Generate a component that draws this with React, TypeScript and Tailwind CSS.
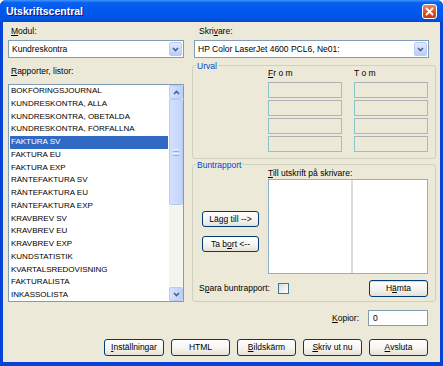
import React from 'react';

const reports = [
  'BOKFÖRINGSJOURNAL',
  'KUNDRESKONTRA, ALLA',
  'KUNDRESKONTRA, OBETALDA',
  'KUNDRESKONTRA, FÖRFALLNA',
  'FAKTURA SV',
  'FAKTURA EU',
  'FAKTURA EXP',
  'RÄNTEFAKTURA SV',
  'RÄNTEFAKTURA EU',
  'RÄNTEFAKTURA EXP',
  'KRAVBREV SV',
  'KRAVBREV EU',
  'KRAVBREV EXP',
  'KUNDSTATISTIK',
  'KVARTALSREDOVISNING',
  'FAKTURALISTA',
  'INKASSOLISTA',
];

const Chevron: React.FC<{ dir: 'up' | 'down' }> = ({ dir }) => (
  <svg width="7" height="5" viewBox="0 0 7 5">
    <polyline
      points={dir === 'down' ? '1,1 3.5,3.5 6,1' : '1,4 3.5,1.5 6,4'}
      fill="none"
      stroke="#4d6185"
      strokeWidth="1.6"
    />
  </svg>
);

const XpButton: React.FC<{ children: React.ReactNode; className?: string }> = ({ children, className = '' }) => (
  <button
    className={`flex items-center justify-center rounded-[3px] border border-[#003c74] bg-[linear-gradient(180deg,#ffffff_0%,#f5f4ef_55%,#e4e1d6_100%)] text-[8.5px] leading-none text-black ${className}`}
  >
    {children}
  </button>
);

const Combo: React.FC<{ value: string; className?: string }> = ({ value, className = '' }) => (
  <div className={`flex h-[18px] items-center border border-[#7f9db9] bg-white pl-[3px] pr-[1px] ${className}`}>
    <span className="flex-1 truncate">{value}</span>
    <span className="flex h-[14px] w-[13px] items-center justify-center rounded-[2px] border border-[#b6cbf8] bg-[linear-gradient(180deg,#e2ebfe,#b9cdfb)]">
      <Chevron dir="down" />
    </span>
  </div>
);

const UrvalField = () => (
  <div className="h-[16px] border border-t-[#aeb0b8] border-l-[#88c4cc] border-r-[#b6b0d8] border-b-[#b0b0c8] bg-[#ece9d8]" />
);

const Scrollbar = () => (
  <div className="flex w-[14px] flex-col bg-[#f5f4ef]">
    <div className="flex h-[14px] items-center justify-center rounded-[2px] border border-[#b6cbf8] bg-[linear-gradient(90deg,#d6e2fd,#bcd0fb)]">
      <Chevron dir="up" />
    </div>
    <div className="flex h-[106px] flex-col items-center justify-center gap-[1px] rounded-[2px] border border-[#b6cbf8] bg-[linear-gradient(90deg,#d3e0fd,#c3d4fc)]">
      <span className="h-px w-[6px] bg-[#eef3ff]" />
      <span className="h-px w-[6px] bg-[#8cb0f8]" />
      <span className="h-px w-[6px] bg-[#eef3ff]" />
      <span className="h-px w-[6px] bg-[#8cb0f8]" />
    </div>
    <div className="flex-1" />
    <div className="flex h-[14px] items-center justify-center rounded-[2px] border border-[#b6cbf8] bg-[linear-gradient(90deg,#d6e2fd,#bcd0fb)]">
      <Chevron dir="down" />
    </div>
  </div>
);

const App: React.FC = () => {
  return (
    <div className="h-[366px] w-[443px] bg-white font-['Liberation_Sans',Arial,sans-serif] text-[8.5px] leading-[11px] text-black">
      <div className="flex h-full flex-col rounded-t-[6px] bg-[#0843d7]">
        {/* title bar */}
        <div className="flex h-[22px] items-center rounded-t-[6px] bg-[linear-gradient(180deg,#3d95ff_0%,#0a61f0_12%,#0058ee_45%,#0055e5_80%,#0047d4_100%)] pl-[6px] pr-[6px]">
          <span className="mt-[1px] flex-1 text-[10.5px] font-bold text-white [text-shadow:1px_1px_#0a1883]">
            Utskriftscentral
          </span>
          <span className="flex h-[15px] w-[15px] items-center justify-center rounded-[3px] border border-white bg-[linear-gradient(180deg,#e8866a,#d9532b_55%,#c23d14)]">
            <svg width="9" height="9" viewBox="0 0 9 9">
              <path d="M1.5 1.5 L7.5 7.5 M7.5 1.5 L1.5 7.5" stroke="#fff" strokeWidth="1.8" strokeLinecap="round" />
            </svg>
          </span>
        </div>

        {/* body */}
        <div className="mx-[3px] mb-[4px] flex flex-1 flex-col bg-[#ece9d8] pl-[5px] pr-[4px] pt-[4px]">
          <div className="grid grid-cols-[176px_244px] gap-x-[8px]">
            {/* left column */}
            <div className="flex flex-col">
              <div className="pl-[3px]">
                <u>M</u>odul:
              </div>
              <Combo value="Kundreskontra" className="mt-[3px]" />
              <div className="mt-[8px] pl-[3px]">
                <u>R</u>apporter, listor:
              </div>
              <div className="mt-[7px] flex h-[218px] overflow-hidden border border-[#7f9db9] bg-white">
                <div className="mr-[1px] flex-1 pl-[1px]">
                  {reports.map((r, i) => (
                    <div
                      key={r}
                      className={`h-[12.75px] pl-[1px] text-[8px] leading-[12.75px] ${i === 4 ? 'bg-[#316ac5] text-white' : ''}`}
                    >
                      {r}
                    </div>
                  ))}
                </div>
                <Scrollbar />
              </div>
            </div>

            {/* right column */}
            <div className="flex flex-col">
              <div className="pl-[7px]">
                Skri<u>v</u>are:
              </div>
              <Combo value="HP Color LaserJet 4600 PCL6, Ne01:" className="ml-[2px] mt-[3px] w-[235px]" />

              <div className="relative mt-[7px] h-[94px] rounded-[3px] border border-[#d0d0bf]">
                <span className="absolute left-[3px] top-[-5px] bg-[#ece9d8] px-[1px] text-[#0046d5]">Urval</span>
                <div className="pl-[75px] pt-[2px]">
                  <div className="grid grid-cols-[74px_74px] gap-x-[12px]">
                    <span>
                      <u>F</u>r o m
                    </span>
                    <span>T o m</span>
                  </div>
                  <div className="mt-[3px] grid grid-cols-[74px_74px] gap-x-[12px] gap-y-[2px]">
                    {Array.from({ length: 8 }).map((_, i) => (
                      <UrvalField key={i} />
                    ))}
                  </div>
                </div>
              </div>

              <div className="relative mt-[5px] h-[138px] rounded-[3px] border border-[#d0d0bf]">
                <span className="absolute left-[3px] top-[-5px] bg-[#ece9d8] px-[1px] text-[#0046d5]">Buntrapport</span>
                <div className="flex pt-[3px]">
                  <div className="flex w-[75px] flex-col items-start gap-[9px] pl-[9px] pt-[43px]">
                    <XpButton className="h-[16px] w-[57px]">{'Lägg till -->'}</XpButton>
                    <XpButton className="h-[16px] w-[57px]">
                      {'Ta b'}
                      <u>o</u>
                      {'rt <--'}
                    </XpButton>
                  </div>
                  <div className="flex flex-col">
                    <div className="h-[11px]">
                      <u>T</u>ill utskrift på skrivare:
                    </div>
                    <div className="grid h-[95px] w-[160px] grid-cols-[84px_1fr] border border-[#8fb0cc] bg-white">
                      <div className="border-r-2 border-[#dedcd4]" />
                      <div />
                    </div>
                  </div>
                </div>
                <div className="mt-[6px] flex items-center pl-[6px] pr-[7px]">
                  <span>
                    S<u>p</u>ara buntrapport:
                  </span>
                  <span className="ml-[8px] h-[11px] w-[11px] border border-[#3d7a9a] bg-[linear-gradient(135deg,#dcdcd6,#ffffff)]" />
                  <XpButton className="ml-auto h-[17px] w-[59px] shadow-[inset_0_1px_#f9d98a]">
                    H<u>ä</u>mta
                  </XpButton>
                </div>
              </div>
            </div>
          </div>

          {/* copies */}
          <div className="mr-[8px] mt-[8px] flex items-center justify-end gap-[9px]">
            <span>
              <u>K</u>opior:
            </span>
            <div className="flex h-[16px] w-[60px] items-center border border-[#7f9db9] bg-white pl-[4px]">0</div>
          </div>

          {/* action buttons */}
          <div className="mr-[8px] mt-[13px] flex justify-end gap-[7px]">
            <XpButton className="h-[17px] w-[60px]">
              <u>I</u>nställningar
            </XpButton>
            <XpButton className="h-[17px] w-[59px]">HTML</XpButton>
            <XpButton className="h-[17px] w-[59px]">
              <u>B</u>ildskärm
            </XpButton>
            <XpButton className="h-[17px] w-[59px]">
              <u>S</u>kriv ut nu
            </XpButton>
            <XpButton className="h-[17px] w-[59px]">
              <u>A</u>vsluta
            </XpButton>
          </div>
        </div>
      </div>
    </div>
  );
};

export default App;
